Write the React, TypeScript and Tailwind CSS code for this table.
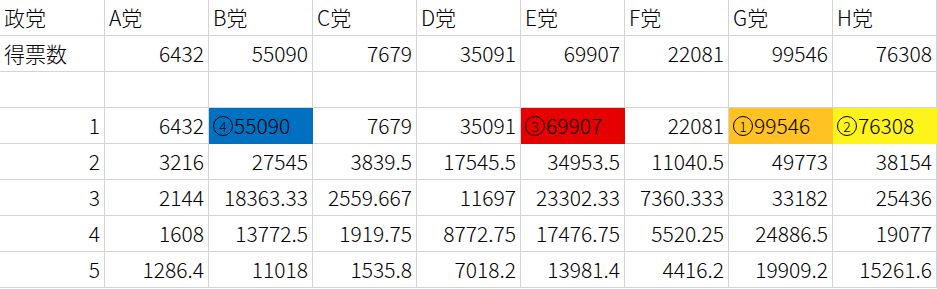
const header = ["政党", "A党", "B党", "C党", "D党", "E党", "F党", "G党", "H党"];

type Cell = { v: string; bg?: string; left?: boolean; rank?: string };

const rows: Cell[][] = [
  header.map((v) => ({ v, left: true })),
  ["得票数", "6432", "55090", "7679", "35091", "69907", "22081", "99546", "76308"].map((v, i) => ({ v, left: i === 0 })),
  header.map(() => ({ v: "" })),
  [
    { v: "1" },
    { v: "6432" },
    { v: "55090", rank: "4", bg: "bg-[#0070c0] border-[#0070c0]", left: true },
    { v: "7679" },
    { v: "35091" },
    { v: "69907", rank: "3", bg: "bg-[#e60000] border-[#e60000]", left: true },
    { v: "22081" },
    { v: "99546", rank: "1", bg: "bg-[#ffc222] border-[#ffc222]", left: true },
    { v: "76308", rank: "2", bg: "bg-[#fff31c] border-[#fff31c]", left: true },
  ],
  ["2", "3216", "27545", "3839.5", "17545.5", "34953.5", "11040.5", "49773", "38154"].map((v) => ({ v })),
  ["3", "2144", "18363.33", "2559.667", "11697", "23302.33", "7360.333", "33182", "25436"].map((v) => ({ v })),
  ["4", "1608", "13772.5", "1919.75", "8772.75", "17476.75", "5520.25", "24886.5", "19077"].map((v) => ({ v })),
  ["5", "1286.4", "11018", "1535.8", "7018.2", "13981.4", "4416.2", "19909.2", "15261.6"].map((v) => ({ v })),
];

export default function App() {
  return (
    <div className="h-[289px] w-[937px] overflow-hidden bg-white font-['Noto_Sans_CJK_JP',sans-serif] text-[21px] font-light text-black">
      {rows.map((row, r) => (
        <div key={r} className="flex h-[36px]">
          {row.map((c, i) => (
            <div
              key={i}
              className={`flex h-[36px] items-center border-b border-r px-[4px] leading-none ${
                i === 0 ? "w-[105px]" : "w-[104px]"
              } ${c.left ? "justify-start" : "justify-end"} ${c.bg ?? "border-[#d4d4d4]"}`}
            >
              {c.rank && (
                <span className="mr-px flex h-[20px] w-[20px] items-center justify-center rounded-full border border-black text-[14px]">
                  {c.rank}
                </span>
              )}
              {c.v}
            </div>
          ))}
        </div>
      ))}
    </div>
  );
}
